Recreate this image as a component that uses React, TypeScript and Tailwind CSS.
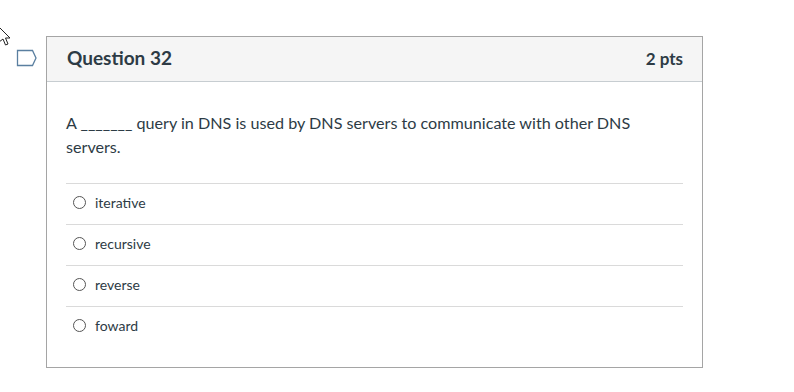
const answers = ["iterative", "recursive", "reverse", "foward"];

const Cursor = () => (
  <svg width="12" height="22" viewBox="0 0 12 22" className="absolute left-0 top-[26px]">
    <path
      d="M-2 0 L10 12 L5.5 12 L8 18 L5.5 19 L3 13 L-1 16"
      fill="#fff"
      stroke="#222"
      strokeWidth="1"
    />
  </svg>
);

const BookmarkIcon = () => (
  <svg width="22" height="18" viewBox="0 0 22 18">
    <path d="M1.5 1.5 H16.5 L20 9 L16.5 16.5 H1.5 Z" fill="none" stroke="#5a7fa0" strokeWidth="1.3" />
  </svg>
);

export default function App() {
  return (
    <div className="relative h-[392px] w-[794px] bg-white font-['Lato',sans-serif] text-[#2d3b45]">
      <Cursor />
      <div className="flex pt-[36px]">
        <div className="flex w-[46px] justify-end pr-[8px] pt-[13px]">
          <BookmarkIcon />
        </div>
        <div className="w-[657px] border border-[#a5a5a5]">
          <div className="flex h-[45px] items-center justify-between border-b border-[#c7cdd1] bg-[#f5f5f5] pb-[1px] pl-[20px] pr-[19px]">
            <h2 className="text-[19px] font-bold">Question 32</h2>
            <span className="text-[17px] font-bold">2 pts</span>
          </div>
          <div className="px-[19px] pt-[29px] pb-[20px]">
            <p className="text-[16.15px] leading-[24px]">
              A _______ query in DNS is used by DNS servers to communicate with other DNS
              <br />
              servers.
            </p>
            <div className="mt-[24px]">
              {answers.map((a) => (
                <div key={a} className="flex h-[41px] items-center border-t border-[#dadada] pb-[3px] pl-[7px] text-[14px]">
                  <span className="mr-[9px] inline-block h-[13px] w-[13px] rounded-full border border-[#555]" />
                  {a}
                </div>
              ))}
            </div>
          </div>
        </div>
      </div>
    </div>
  );
}
